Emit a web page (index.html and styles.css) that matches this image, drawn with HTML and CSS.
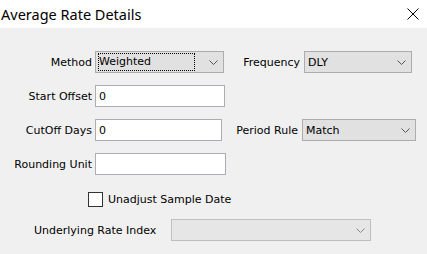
FILE: index.html
```html
<!DOCTYPE html>
<html lang="en">
<head>
  <meta charset="UTF-8">
  <meta name="viewport" content="width=device-width, initial-scale=1.0">
  <title>Average Rate Details</title>
  <link rel="stylesheet" href="styles.css">
</head>
<body>
  <div class="titlebar">
    <span class="title">Average Rate Details</span>
    <svg class="close" width="12" height="12" viewBox="0 0 12 12">
      <path d="M0.5 0.5 L11.5 11.5 M11.5 0.5 L0.5 11.5" stroke="#000" stroke-width="1" fill="none"/>
    </svg>
  </div>

  <div class="dialog">
    <div class="row">
      <label class="lbl">Method</label>
      <div class="combo w-method">
        <span class="focus-rect">Weighted</span>
        <svg class="chev" width="9" height="5" viewBox="0 0 9 5"><polyline points="0.5,0.5 4.5,4.5 8.5,0.5" fill="none" stroke="#555" stroke-width="1"/></svg>
      </div>
      <label class="lbl2">Frequency</label>
      <div class="combo w-freq">
        <span class="val">DLY</span>
        <svg class="chev" width="9" height="5" viewBox="0 0 9 5"><polyline points="0.5,0.5 4.5,4.5 8.5,0.5" fill="none" stroke="#555" stroke-width="1"/></svg>
      </div>
    </div>

    <div class="row">
      <label class="lbl">Start Offset</label>
      <div class="field w-start">0</div>
    </div>

    <div class="row">
      <label class="lbl">CutOff Days</label>
      <div class="field w-cutoff">0</div>
      <label class="lbl2">Period Rule</label>
      <div class="combo w-period">
        <span class="val">Match</span>
        <svg class="chev" width="9" height="5" viewBox="0 0 9 5"><polyline points="0.5,0.5 4.5,4.5 8.5,0.5" fill="none" stroke="#555" stroke-width="1"/></svg>
      </div>
    </div>

    <div class="row">
      <label class="lbl">Rounding Unit</label>
      <div class="field w-round"></div>
    </div>

    <div class="row row-check">
      <span class="checkbox"></span>
      <span class="check-label">Unadjust Sample Date</span>
    </div>

    <div class="row row-index">
      <label class="lbl-index">Underlying Rate Index</label>
      <div class="combo disabled w-index">
        <span class="val"></span>
        <svg class="chev" width="9" height="5" viewBox="0 0 9 5"><polyline points="0.5,0.5 4.5,4.5 8.5,0.5" fill="none" stroke="#888" stroke-width="1"/></svg>
      </div>
    </div>
  </div>
</body>
</html>
```

FILE: styles.css
```css
html, body {
  margin: 0;
  padding: 0;
  background: #f0f0f0;
}
body {
  font-family: "DejaVu Sans", sans-serif;
  font-size: 11px;
  color: #000;
  width: 427px;
  height: 254px;
  overflow: hidden;
}
.titlebar {
  height: 28px;
  background: #fff;
  display: flex;
  align-items: center;
  justify-content: space-between;
  padding: 0 8px 0 1px;
}
.title {
  font-family: "Noto Sans", sans-serif;
  font-size: 14.5px;
  margin-top: -1px;
}
.dialog {
  padding-top: 23px;
  display: flex;
  flex-direction: column;
}
.row {
  display: flex;
  align-items: center;
  height: 22px;
  margin-bottom: 12px;
}
.lbl {
  width: 95px;
  text-align: right;
  padding-right: 3px;
  box-sizing: border-box;
  flex: none;
}
.lbl2 {
  width: 80px;
  text-align: right;
  padding-right: 4px;
  box-sizing: border-box;
  flex: none;
}
.field, .combo {
  box-sizing: border-box;
  height: 22px;
  display: flex;
  align-items: center;
  flex: none;
}
.field {
  background: #fff;
  border: 1px solid #abadb3;
  padding-left: 3px;
}
.combo {
  background: #e1e1e1;
  border: 1px solid #adadad;
  padding-left: 3px;
  justify-content: space-between;
}
.combo.disabled {
  background: #e6e6e6;
  border-color: #bfbfbf;
}
.focus-rect {
  flex: 1;
  height: 16px;
  line-height: 16px;
  margin-right: 15px;
  outline: 1px dotted #000;
}
.chev {
  flex: none;
  margin-right: 5px;
}
.w-method { width: 129px; }
.w-freq { width: 108px; }
.w-start { width: 130px; }
.w-cutoff { width: 127px; }
.w-period { width: 114px; }
.w-round { width: 131px; }
.row-check {
  height: 16px;
  margin-top: 4px;
  padding-left: 88px;
}
.checkbox {
  width: 15px;
  height: 15px;
  box-sizing: border-box;
  border: 1px solid #333;
  background: #fff;
  margin-right: 5px;
}
.row-index {
  margin-top: 0;
}
.lbl-index {
  width: 171px;
  padding-left: 34px;
  box-sizing: border-box;
}
.w-index { width: 200px; }
```
